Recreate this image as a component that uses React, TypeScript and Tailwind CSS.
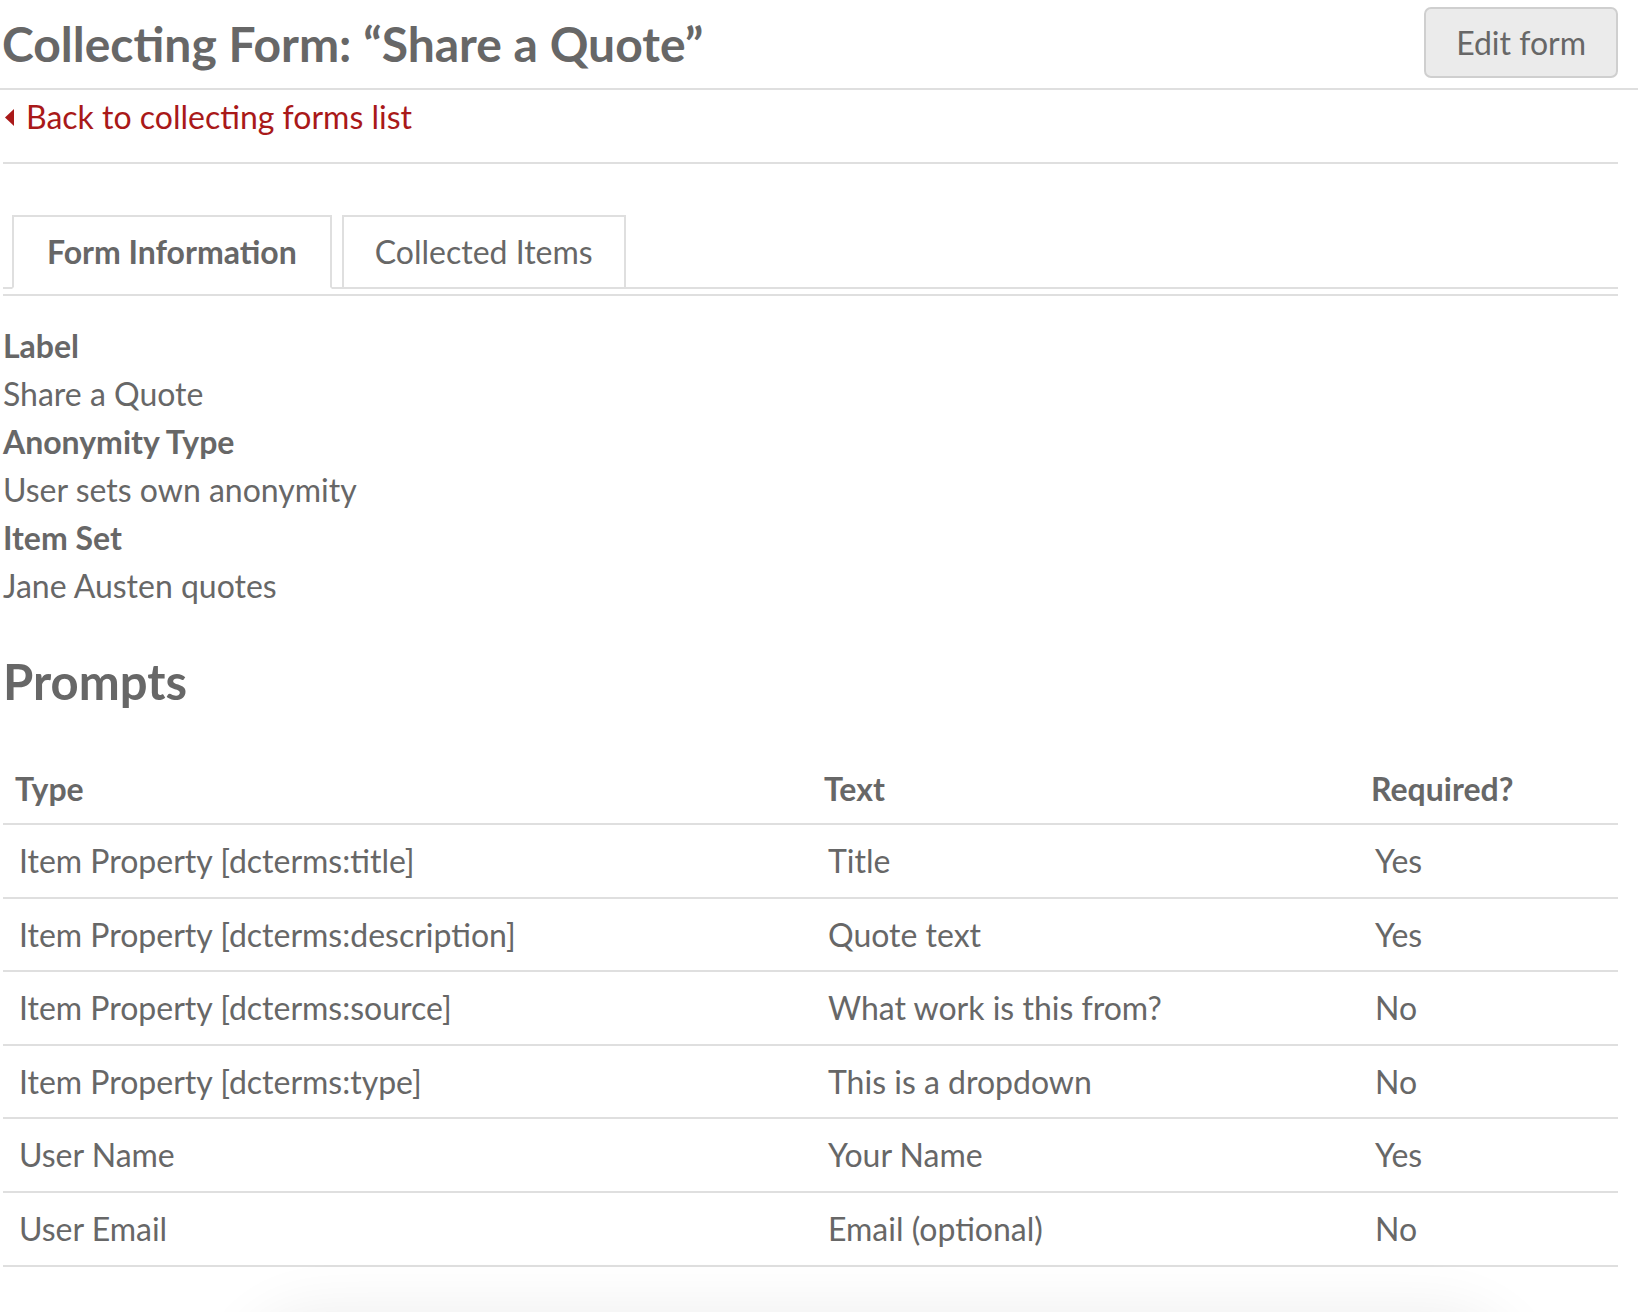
import React from "react";

const rows: [string, string, string][] = [
  ["Item Property [dcterms:title]", "Title", "Yes"],
  ["Item Property [dcterms:description]", "Quote text", "Yes"],
  ["Item Property [dcterms:source]", "What work is this from?", "No"],
  ["Item Property [dcterms:type]", "This is a dropdown", "No"],
  ["User Name", "Your Name", "Yes"],
  ["User Email", "Email (optional)", "No"],
];

export default function App() {
  return (
    <div className="relative w-[1638px] h-[1312px] overflow-hidden bg-white text-[#676767] font-['Lato',sans-serif] text-[32px] leading-[48px]">
      {/* Header */}
      <div className="flex justify-between items-start h-[90px] border-b-2 border-[#dfdfdf]">
        <h1 className="pl-[2px] mt-[15px] text-[48px] leading-[58px] font-bold">
          Collecting Form: “Share a Quote”
        </h1>
        <button className="mt-[7px] mr-[20px] h-[71px] px-[30px] bg-[#ebebeb] border-2 border-[#cfcfcf] rounded-[7px] text-[32px] leading-[48px] text-[#676767]">
          Edit form
        </button>
      </div>

      <div className="ml-[3px] w-[1615px]">
        {/* Back link */}
        <div className="pt-[3px] pb-[21px] border-b-2 border-[#dfdfdf]">
          <a className="flex items-center text-[#a91919]" href="#">
            <svg width="9" height="17" viewBox="0 0 9 17" className="shrink-0 ml-[2px] mr-[12px]">
              <path d="M9 0 L0 8.5 L9 17 Z" fill="#a91919" />
            </svg>
            <span>Back to collecting forms list</span>
          </a>
        </div>

        {/* Tabs */}
        <ul className="mt-[51px] flex gap-[10px] pl-[9px] border-b-2 border-[#dfdfdf]">
          <li className="-mb-[2px] border-2 border-[#dfdfdf] border-b-white bg-white px-[33px] py-[11px] font-bold">
            Form Information
          </li>
          <li className="-mb-[2px] border-2 border-[#dfdfdf] bg-white px-[31px] py-[11px]">
            Collected Items
          </li>
        </ul>
        <div className="mt-[5px] border-t-2 border-[#dfdfdf]" />

        {/* Definition list */}
        <dl className="pt-[26px]">
          <dt className="font-bold">Label</dt>
          <dd>Share a Quote</dd>
          <dt className="font-bold">Anonymity Type</dt>
          <dd>User sets own anonymity</dd>
          <dt className="font-bold">Item Set</dt>
          <dd>Jane Austen quotes</dd>
        </dl>

        <h2 className="mt-[42px] text-[49px] leading-[58px] font-bold">Prompts</h2>

        <table className="mt-[45px] w-[1615px] table-fixed border-collapse">
          <colgroup>
            <col className="w-[809px]" />
            <col className="w-[547px]" />
            <col className="w-[259px]" />
          </colgroup>
          <thead>
            <tr className="border-b-2 border-[#dfdfdf]">
              <th className="text-left font-bold pl-3 pt-[10px] pb-[10px]">Type</th>
              <th className="text-left font-bold pl-3 pt-[10px] pb-[10px]">Text</th>
              <th className="text-left font-bold pl-3 pt-[10px] pb-[10px]">Required?</th>
            </tr>
          </thead>
          <tbody>
            {rows.map((r) => (
              <tr key={r[0]} className="border-b-2 border-[#dfdfdf] leading-[47.6px]">
                <td className="pl-4 py-3">{r[0]}</td>
                <td className="pl-4 py-3">{r[1]}</td>
                <td className="pl-4 py-3">{r[2]}</td>
              </tr>
            ))}
          </tbody>
        </table>
      </div>

      {/* soft shadow rising from below the viewport */}
      <div className="absolute left-[260px] right-[140px] top-[1335px] h-[120px] rounded-[60px] bg-white shadow-[0_0_60px_25px_rgba(0,0,0,0.07)]" />
    </div>
  );
}
